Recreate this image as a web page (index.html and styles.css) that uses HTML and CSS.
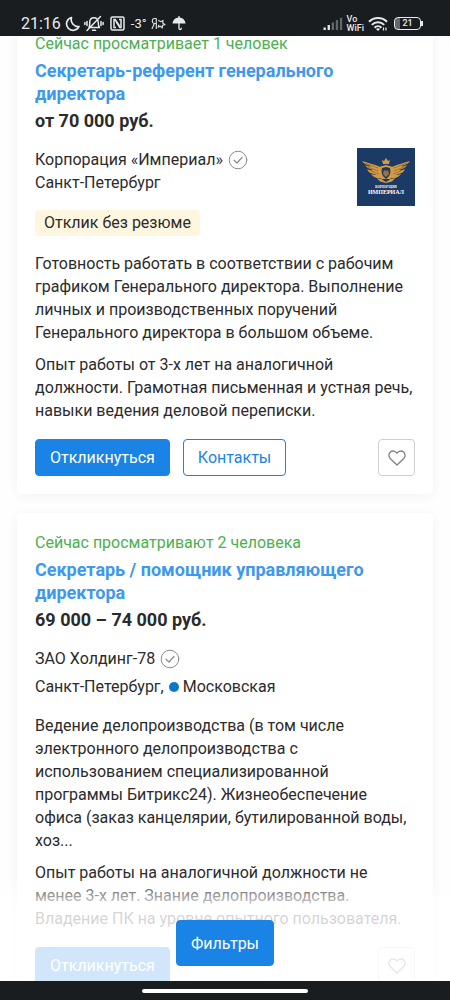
FILE: index.html
```html
<!DOCTYPE html>
<html lang="ru">
<head>
    <meta charset="UTF-8">
    <meta name="viewport" content="width=device-width, initial-scale=1.0">
    <title>Вакансии</title>
    <link rel="stylesheet" href="styles.css">
</head>
<body>
    <header class="status-bar">
        <div class="status-group">
            <span class="clock">21:16</span>
            <svg width="15" height="16" viewBox="0 0 15 16" fill="none" stroke="#e8eaeb" stroke-width="1.700" stroke-linejoin="round"><path d="M6.500 1.500A6.500 6.500 0 1 0 14 10.500A7 7 0 0 1 6.500 1.500Z"/></svg>
            <svg class="icon-bell" width="20" height="17" viewBox="0 0 20 17" fill="none" stroke="#e8eaeb" stroke-width="1.500" stroke-linecap="round" stroke-linejoin="round"><path d="M5 12.500h10.500c-1-1.200-1.300-2-1.300-5.300 0-2.600-1.700-4.400-4.200-4.400S5.800 4.600 5.800 7.200c0 3-.2 4-.8 5.300M8.500 15.200h3M3 15.500L16.500 1.500M3 6.500v4M.9 7.500v2M17 6.500v4M19.100 7.500v2"/></svg>
            <svg class="icon-nfc" width="15" height="15" viewBox="0 0 15 15" fill="none" stroke="#e8eaeb" stroke-width="1.500"><rect x="1" y="1" width="13" height="13" rx="1.500"/><path d="M6 11.500H4V3.500h1.200L9.500 10M9 3.500h2v8H9.800L5.800 5.200"/></svg>
            <span class="temperature">-3°</span>
            <svg class="icon-ya" width="15" height="14" viewBox="0 0 15 14" fill="none" stroke="#d6d9da" stroke-width="1.200" stroke-linejoin="round"><path d="M5.300 12V1.500H3.500C.6 1.500.6 6.500 3.500 6.500h1.800M3.300 6.500L.9 12M7.300 3.300l2.500 1.400 2.200-1.200-.3 2.600 2.200 1.500-2.500.7-.1 2.700-1.900-1.700-2.300.8.9-2.400"/></svg>
            <svg class="icon-umbrella" width="14" height="15" viewBox="0 0 14 15"><path d="M.5 7.500C.8 4 3.200 1.800 7 1.500c3.800.3 6.200 2.500 6.500 6z" fill="#e8eaeb"/><path d="M7 .5v11.700c0 1.700 2.300 1.700 2.300 0" fill="none" stroke="#e8eaeb" stroke-width="1.300" stroke-linecap="round"/></svg>
        </div>
        <div class="status-group">
            <svg width="20" height="14" viewBox="0 0 20 14"><path d="M.5 10.500h2.300V13H.5zM4.600 8h2.300v5H4.600z" fill="#e8eaeb"/><path d="M8.700 5.500H11V13H8.700zM12.800 3h2.300v10h-2.300zM16.900.8h2.300V13h-2.300z" fill="#62676a"/></svg>
            <span class="vowifi">Vo<br>WiFi</span>
            <svg width="20" height="16" viewBox="0 0 20 16" fill="none" stroke="#e8eaeb" stroke-width="2"><path d="M1 5.800c5-5 13-5 18 0M3.800 8.900c3.500-3.500 8.900-3.500 12.400 0M6.500 11.800c2-2 5-2 7 0"/><path d="M8 13c1.200-1 2.800-1 4 0l-2 2z" fill="#e8eaeb" stroke="none"/><path d="M15.500 11.500v3M18 11.500v3" stroke-width="1.200"/></svg>
            <span class="battery">21</span>
        </div>
    </header>

    <main class="feed">
        <article class="card">
            <p class="viewers">Сейчас просматривает 1 человек</p>
            <h2 class="title"><a href="#">Секретарь-референт генерального директора</a></h2>
            <p class="salary">от 70 000 руб.</p>
            <div class="employer">
                <div class="employer-info">
                    <p class="company">Корпорация «Империал»
                        <svg class="verified" viewBox="0 0 20 20" fill="none" stroke="#8b8b8b" stroke-linecap="round" stroke-linejoin="round"><circle cx="10" cy="10" r="8.800"/><path d="M6 10.300l3 2.700 5-5.500" stroke-width="1.200"/></svg>
                    </p>
                    <p>Санкт-Петербург</p>
                    <span class="badge">Отклик без резюме</span>
                </div>
                <svg class="logo" viewBox="0 0 58 58">
                    <rect width="58" height="58" fill="#1c3a66"/>
                    <g fill="#d69a3e">
                        <path d="M5 13c6 2 12 3 18 6l2 4v7c-5 1-9-1-11-4 2 1 4 1 5 0-5 0-8-2-9-5 2 1 4 2 6 1-4-1-7-3-8-5 2 1 4 2 6 1-4-1-7-2-9-5z"/>
                        <path d="M53 13c-6 2-12 3-18 6l-2 4v7c5 1 9-1 11-4-2 1-4 1-5 0 5 0 8-2 9-5-2 1-4 2-6 1 4-1 7-3 8-5-2 1-4 2-6 1 4-1 7-2 9-5z"/>
                        <path d="M22 19l7-2 7 2c2 7-1 12-7 15-6-3-9-8-7-15zM20 30c2 4 5 4 9 5 4-1 7-1 9-5l-3 1H23z"/>
                        <path d="M26 16l-1-4 2 1 2-3 2 3 2-1-1 4z"/>
                    </g>
                    <path d="M25 20l4-1 4 1c1 5 0 8-4 11-4-3-5-6-4-11z" fill="#1c3a66"/>
                    <path d="M27 22l2 1 2-1 1 4-3 3-3-3z" fill="#9b7440"/>
                    <path d="M8 15l13 5M11 19l10 4M14 23l8 3M50 15l-13 5M47 19l-10 4M44 23l-8 3" stroke="#8a6736" stroke-width=".7"/>
                    <text class="logo-small" x="29" y="40">КОРПОРАЦИЯ</text>
                    <text class="logo-name" x="29" y="46">ИМПЕРИАЛ</text>
                </svg>
            </div>
            <div class="description">
                <p>Готовность работать в соответствии с рабочим графиком Генерального директора. Выполнение личных и производственных поручений Генерального директора в большом объеме.</p>
                <p>Опыт работы от 3-х лет на аналогичной должности. Грамотная письменная и устная речь, навыки ведения деловой переписки.</p>
            </div>
            <div class="actions">
                <button class="btn btn-primary">Откликнуться</button>
                <button class="btn btn-outline">Контакты</button>
                <button class="btn-like" aria-label="В избранное">
                    <svg width="18" height="16" viewBox="0 0 18 16" fill="none" stroke="#808080" stroke-width="1.300" stroke-linejoin="round"><path d="M9 15L2.200 8.500C.3 6.500.6 3.500 2.400 2c2-1.700 4.900-1.200 6.600 1.200C10.700.8 13.600.3 15.600 2c1.800 1.500 2.100 4.500.2 6.500z"/></svg>
                </button>
            </div>
        </article>

        <article class="card">
            <p class="viewers">Сейчас просматривают 2 человека</p>
            <h2 class="title"><a href="#">Секретарь / помощник управляющего директора</a></h2>
            <p class="salary">69 000 – 74 000 руб.</p>
            <div class="employer">
                <div class="employer-info">
                    <p class="company">ЗАО Холдинг-78
                        <svg class="verified" viewBox="0 0 20 20" fill="none" stroke="#8b8b8b" stroke-linecap="round" stroke-linejoin="round"><circle cx="10" cy="10" r="8.800"/><path d="M6 10.300l3 2.700 5-5.500" stroke-width="1.200"/></svg>
                    </p>
                    <p class="with-metro">Санкт-Петербург, <span class="metro">Московская</span></p>
                </div>
            </div>
            <div class="description">
                <p>Ведение делопроизводства (в том числе электронного делопроизводства с использованием специализированной программы Битрикс24). Жизнеобеспечение офиса (заказ канцелярии, бутилированной воды, хоз...</p>
                <p>Опыт работы на аналогичной должности не менее 3-х лет. Знание делопроизводства. Владение ПК на уровне опытного пользователя.</p>
            </div>
            <div class="actions">
                <button class="btn btn-primary">Откликнуться</button>
                <button class="btn-like" aria-label="В избранное">
                    <svg width="18" height="16" viewBox="0 0 18 16" fill="none" stroke="#808080" stroke-width="1.300" stroke-linejoin="round"><path d="M9 15L2.200 8.500C.3 6.500.6 3.500 2.400 2c2-1.700 4.900-1.200 6.600 1.200C10.700.8 13.600.3 15.600 2c1.800 1.500 2.100 4.500.2 6.500z"/></svg>
                </button>
            </div>
        </article>
    </main>

    <div class="filters">
        <button class="btn btn-primary btn-filters">Фильтры</button>
    </div>
    <footer class="nav-bar"><span class="nav-handle"></span></footer>
</body>
</html>
```
FILE: styles.css
```css
* {
    margin: 0;
    padding: 0;
    box-sizing: border-box;
}

body {
    font-family: Roboto, "Noto Sans", sans-serif;
    font-size: 16px;
    line-height: 23px;
    color: #2b2b2b;
    background: #fefefe;
}

button {
    font: inherit;
    cursor: pointer;
}

/* system bars */
.status-bar {
    position: fixed;
    top: 0;
    left: 0;
    right: 0;
    z-index: 3;
    height: 36px;
    padding: 11px 29px 0 21px;
    display: flex;
    justify-content: space-between;
    background: #191d20;
    color: #e8eaeb;
}

.status-group {
    display: flex;
    align-items: center;
    gap: 4px;
}

.clock {
    font-size: 16px;
}

.icon-bell,
.icon-nfc {
    margin-right: 2px;
}

.temperature {
    font-size: 13px;
}

.icon-umbrella {
    margin-left: 2px;
}

.vowifi {
    font-size: 9px;
    line-height: 9px;
    font-weight: 500;
}

.battery {
    position: relative;
    width: 27px;
    height: 13px;
    margin-left: 2px;
    border: 1px solid #e8eaeb;
    border-radius: 4px;
    background: linear-gradient(90deg, #62676a 5px, transparent 5px);
    font-size: 9px;
    line-height: 11px;
    font-weight: 500;
    text-align: center;
}

.battery::after {
    content: "";
    position: absolute;
    top: 3px;
    right: -3px;
    width: 2px;
    height: 5px;
    background: #e8eaeb;
}

.nav-bar {
    position: fixed;
    left: 0;
    right: 0;
    bottom: 0;
    z-index: 3;
    height: 19px;
    display: flex;
    align-items: center;
    justify-content: center;
    background: #191d20;
}

.nav-handle {
    width: 37%;
    height: 4px;
    border-radius: 2px;
    background: #fff;
}

/* vacancies */
.feed {
    height: 100vh;
    overflow: hidden;
    padding: 14px 17px 0;
}

.card {
    margin-bottom: 19px;
    padding: 18px;
    background: #fff;
    border-radius: 5px;
    box-shadow: 0 2px 12px rgba(30, 50, 60, 0.06);
}

.viewers {
    color: #4caf50;
}

.title {
    margin-top: 4px;
    font-size: 18px;
    line-height: 23px;
    font-weight: 700;
}

.title a {
    color: #3d98ee;
    text-decoration: none;
}

.salary {
    margin-top: 4px;
    font-size: 18px;
    font-weight: 700;
}

.employer {
    display: flex;
    justify-content: space-between;
    margin-top: 16px;
}

.company {
    display: flex;
    align-items: center;
    gap: 5px;
}

.verified {
    width: 20px;
    height: 20px;
}

.with-metro {
    margin-top: 5px;
}

.metro::before {
    content: "";
    display: inline-block;
    width: 10px;
    height: 10px;
    margin: 0 4px 0 1px;
    border-radius: 50%;
    background: #0a78c8;
}

.badge {
    display: inline-block;
    margin-top: 16px;
    padding: 2px 9px;
    border-radius: 4px;
    line-height: 22px;
    background: #fff6e0;
}

.logo {
    width: 58px;
    height: 58px;
    flex: none;
}

.logo-small,
.logo-name {
    fill: #fff;
    font-family: "Liberation Serif", serif;
    font-weight: 700;
    text-anchor: middle;
}

.logo-small {
    font-size: 3px;
}

.logo-name {
    font-size: 6px;
}

.description {
    margin-top: 16px;
}

.description p + p {
    margin-top: 9px;
}

.actions {
    display: flex;
    gap: 13px;
    margin-top: 17px;
}

.btn {
    height: 37px;
    padding: 0 14px;
    border: 1px solid #1a84e6;
    border-radius: 4px;
}

.btn-primary {
    background: #1a84e6;
    color: #fff;
}

.btn-outline {
    background: #fff;
    color: #1a84e6;
}

.btn-like {
    display: flex;
    align-items: center;
    justify-content: center;
    width: 37px;
    height: 37px;
    margin-left: auto;
    border: 1px solid #cfcfcf;
    border-radius: 4px;
    background: #fff;
}

/* floating filters */
.filters {
    position: fixed;
    left: 0;
    right: 0;
    bottom: 19px;
    z-index: 2;
    height: 105px;
    display: flex;
    align-items: flex-end;
    justify-content: center;
    padding-bottom: 15px;
    background: linear-gradient(rgba(255, 255, 255, 0), rgba(255, 255, 255, 0.8) 30px);
}

.btn-filters {
    height: 46px;
}
```
